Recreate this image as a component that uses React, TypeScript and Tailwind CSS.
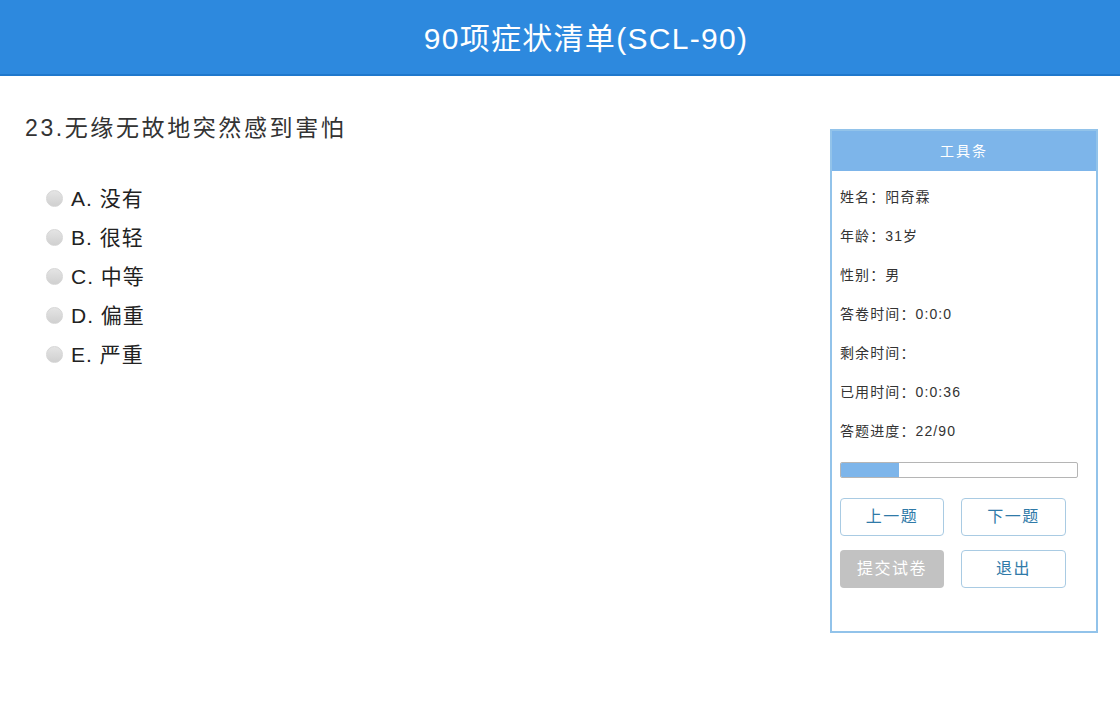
import { useState } from 'react';

const options = [
  { key: 'A', label: '没有' },
  { key: 'B', label: '很轻' },
  { key: 'C', label: '中等' },
  { key: 'D', label: '偏重' },
  { key: 'E', label: '严重' },
];

const info = [
  { label: '姓名', value: '阳奇霖' },
  { label: '年龄', value: '31岁' },
  { label: '性别', value: '男' },
  { label: '答卷时间', value: '0:0:0' },
  { label: '剩余时间', value: '' },
  { label: '已用时间', value: '0:0:36' },
  { label: '答题进度', value: '22/90' },
];

export default function App() {
  const [picked, setPicked] = useState<string | null>(null);
  const progress = (22 / 90) * 100;

  return (
    <div
      className="w-[1120px] h-[722px] bg-white overflow-hidden"
      style={{ fontFamily: '"Liberation Sans", "Noto Sans CJK SC", sans-serif' }}
    >
      {/* Header */}
      <div className="h-[76px] bg-[#2d89de] border-b-2 border-[#1f78cc] flex items-center justify-center pl-[52px]">
        <h1 className="text-[30px] tracking-[1.3px] text-white pt-0.5">90项症状清单(SCL-90)</h1>
      </div>

      <div className="flex justify-between pl-[25px] pr-[22px]">
        {/* Question */}
        <div className="pt-[38px]">
          <p className="text-[23px] tracking-[2.6px] text-[#333] leading-[28px]">23.无缘无故地突然感到害怕</p>
          <div className="mt-[37px] pl-[21px] flex flex-col">
            {options.map((o) => (
              <label
                key={o.key}
                className="flex items-center h-[39px] cursor-pointer"
                onClick={() => setPicked(o.key)}
              >
                <span className="w-[17px] h-[17px] rounded-full bg-gradient-to-b from-[#e4e4e4] to-[#d0d0d0] border border-[#d6d6d6] flex items-center justify-center">
                  {picked === o.key && <span className="w-[7px] h-[7px] rounded-full bg-[#555]" />}
                </span>
                <span className="ml-[8px] text-[21px] tracking-[1px] text-[#222]">
                  {o.key}. {o.label}
                </span>
              </label>
            ))}
          </div>
        </div>

        {/* Tool panel */}
        <div className="mt-[53px] w-[268px] h-[504px] border-2 border-[#92c3ea] flex flex-col">
          <div className="h-[40px] bg-[#7db5ea] flex items-center justify-center text-[14px] tracking-[2px] text-white">
            工具条
          </div>
          <div className="pl-[8px] pr-[18px] pt-[7px]">
            {info.map((r) => (
              <div key={r.label} className="h-[39px] flex items-center text-[14px] tracking-[1.1px] text-[#333]">
                {r.label}：{r.value}
              </div>
            ))}
            <div className="mt-[11px] h-[16px] border border-[#b5b5b5] rounded-[2px] bg-white overflow-hidden">
              <div className="h-full bg-[#7db5ea]" style={{ width: `${progress}%` }} />
            </div>
            <div className="mt-[20px] grid grid-cols-[104px_105px] gap-x-[17px] gap-y-[14px]">
              <button className="h-[38px] border border-[#a9cbe3] rounded-[4px] bg-white text-[16px] tracking-[1.5px] text-[#2f7aa8]">
                上一题
              </button>
              <button className="h-[38px] border border-[#a9cbe3] rounded-[4px] bg-white text-[16px] tracking-[1.5px] text-[#2f7aa8]">
                下一题
              </button>
              <button className="h-[38px] rounded-[4px] bg-[#c2c2c2] text-[16px] tracking-[1.5px] text-white">
                提交试卷
              </button>
              <button className="h-[38px] border border-[#a9cbe3] rounded-[4px] bg-white text-[16px] tracking-[1.5px] text-[#2f7aa8]">
                退出
              </button>
            </div>
          </div>
        </div>
      </div>
    </div>
  );
}
